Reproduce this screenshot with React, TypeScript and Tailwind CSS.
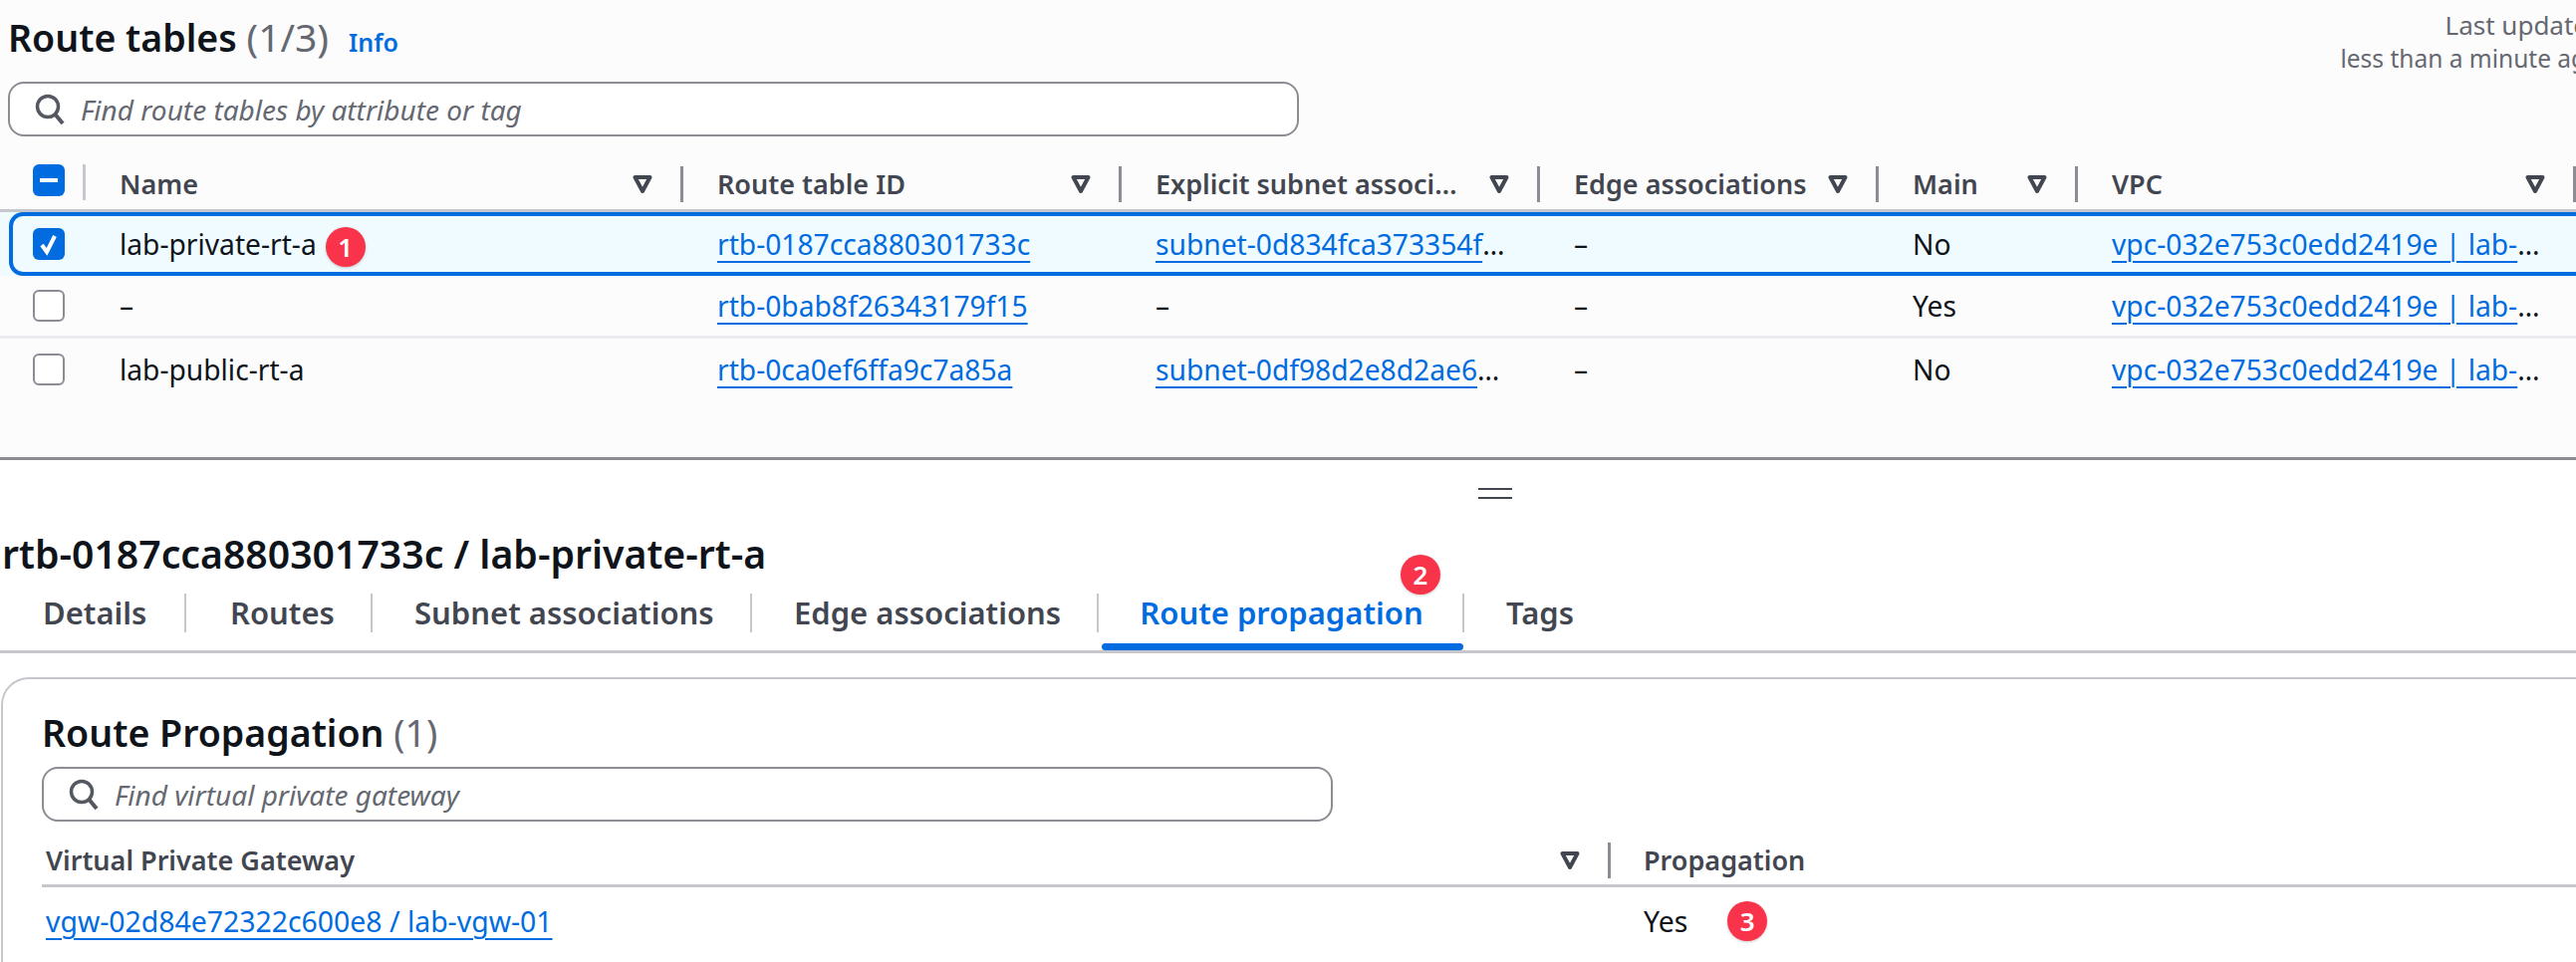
import type { ReactNode } from 'react';

const cols = 'grid grid-cols-[86px_600px_440px_420px_340px_200px_500px]';

const SearchIcon = () => (
  <svg width="32" height="32" viewBox="0 0 32 32" fill="none" stroke="#545861" strokeWidth="3.5" className="shrink-0">
    <circle cx="14" cy="13" r="10.5" />
    <path d="M21.5 21 L29 30" strokeWidth="4" />
  </svg>
);

const SortIcon = () => (
  <svg width="20" height="20" viewBox="0 0 20 20" fill="none" stroke="#424650" strokeWidth="4" strokeLinejoin="round" className="shrink-0">
    <path d="M2.5 3 H17.5 L10 17 Z" />
  </svg>
);

const Badge = ({ n }: { n: number }) => (
  <span className="flex h-10 w-10 shrink-0 items-center justify-center rounded-full bg-[#f9344a] text-[26px] font-semibold leading-none text-white shadow-[0_1px_3px_rgba(0,0,0,0.2)]">
    {n}
  </span>
);

const Search = ({ text, width }: { text: string; width: string }) => (
  <div className={`flex h-[55px] items-center gap-[15px] rounded-[16px] border-2 border-[#8c8c94] bg-white pl-[24px] ${width}`}>
    <SearchIcon />
    <span className="text-[28px] italic text-[#656871]">{text}</span>
  </div>
);

const Link = ({ children }: { children: ReactNode }) => (
  <a className="text-[#006ce0] underline decoration-2 underline-offset-[6px]">{children}</a>
);

const HeadCell = ({ label, sep = true }: { label: string; sep?: boolean }) => (
  <div className="flex items-center justify-between pl-[34px]">
    <span className="max-w-[310px] truncate text-[27px] font-semibold text-[#424650]">{label}</span>
    <div className="flex items-center gap-[28px]">
      <SortIcon />
      {sep ? <div className="h-[36px] w-[3px] bg-[#8c8c94]" /> : null}
    </div>
  </div>
);

const Cell = ({ children }: { children: ReactNode }) => (
  <div className="truncate pl-[34px] pr-[30px] text-[28.2px] text-[#0f141a]">{children}</div>
);

const Check = ({ state }: { state: 'all' | 'on' | 'off' }) => {
  if (state === 'off') {
    return <div className="h-8 w-8 rounded-[6px] border-2 border-[#8c8c94] bg-white" />;
  }
  return (
    <div className="flex h-8 w-8 items-center justify-center rounded-[6px] bg-[#006ce0]">
      <svg width="24" height="24" viewBox="0 0 24 24" fill="none" stroke="white" strokeWidth="4">
        {state === 'on' ? <path d="M5 13 L10 20 L18 4" /> : <path d="M3 12 H21" />}
      </svg>
    </div>
  );
};

const vpc = 'vpc-032e753c0edd2419e | lab-vpc-main';

const rows = [
  { check: 'on' as const, name: 'lab-private-rt-a', id: 'rtb-0187cca880301733c', subnet: 'subnet-0d834fca373354f1c / lab-private-a', main: 'No', h: 'h-[64px]' },
  { check: 'off' as const, name: '–', id: 'rtb-0bab8f26343179f15', subnet: '', main: 'Yes', h: 'h-[63px] border-b-[3px] border-[#ebebf0]' },
  { check: 'off' as const, name: 'lab-public-rt-a', id: 'rtb-0ca0ef6ffa9c7a85a', subnet: 'subnet-0df98d2e8d2ae6a1b / lab-public-a', main: 'No', h: 'h-[62px]' },
];

const tabs = [
  { label: 'Details', cls: 'w-[187px] pl-[43px] border-r-2' },
  { label: 'Routes', cls: 'w-[187px] pl-[44px] border-r-2' },
  { label: 'Subnet associations', cls: 'w-[381px] pl-[42px] border-r-2' },
  { label: 'Edge associations', cls: 'w-[348px] pl-[42px] border-r-2' },
];

export default function App() {
  return (
    <div className="h-[966px] w-[2586px] overflow-hidden bg-white font-['Noto_Sans',sans-serif]">
      {/* Route tables list */}
      <section className="h-[462px] border-b-[3px] border-[#8c8c94] bg-[#fcfcfc]">
        <div className="flex h-[82px] justify-between">
          <h1 className="flex items-baseline gap-[20px] pl-[8px] pt-[9px] text-[37.5px] font-semibold leading-[56px] text-[#0f141a]">
            <span>
              Route tables <span className="text-[39px] font-normal text-[#656871]">(1/3)</span>
            </span>
            <a className="text-[25px] font-semibold text-[#006ce0]">Info</a>
          </h1>
          <div className="pt-[8px] text-right leading-[34px] text-[#656871]">
            <div className="-mr-[28px] text-[26px]">Last updated</div>
            <div className="-mr-[25px] text-[24.5px]">less than a minute ago</div>
          </div>
        </div>

        <div className="pl-[8px]">
          <Search text="Find route tables by attribute or tag" width="w-[1296px]" />
        </div>

        <div className={`${cols} mt-[28px] h-[48px] border-b-[3px] border-[#c6c6cd] pb-[9px]`}>
          <div className="flex items-start justify-between pl-[33px]">
            <Check state="all" />
            <div className="h-[36px] w-[3px] bg-[#c6c6cd]" />
          </div>
          <HeadCell label="Name" />
          <HeadCell label="Route table ID" />
          <HeadCell label="Explicit subnet associations" />
          <HeadCell label="Edge associations" />
          <HeadCell label="Main" />
          <HeadCell label="VPC" />
        </div>

        {rows.map((r, i) => (
          <div key={r.id} className={`${cols} relative items-center ${r.h} ${i === 0 ? 'bg-[#f0fbff]' : ''}`}>
            {i === 0 ? (
              <div className="absolute inset-y-0 left-[9px] -right-[20px] rounded-l-[14px] border-4 border-[#006ce0]" />
            ) : null}
            <div className="pl-[33px]">
              <Check state={r.check} />
            </div>
            <div className="relative flex items-center gap-[9px] pl-[34px] text-[28.2px] text-[#0f141a]">
              {r.name}
              {i === 0 ? (
                <div className="mt-[6px]">
                  <Badge n={1} />
                </div>
              ) : null}
            </div>
            <Cell>
              <Link>{r.id}</Link>
            </Cell>
            <Cell>{r.subnet ? <Link>{r.subnet}</Link> : '–'}</Cell>
            <Cell>–</Cell>
            <Cell>{r.main}</Cell>
            <Cell>
              <Link>{vpc}</Link>
            </Cell>
          </div>
        ))}
      </section>

      {/* Split panel handle */}
      <div className="flex h-[60px] flex-col items-center pt-[28px]">
        <div className="ml-[416px] h-[11px] w-[34px] border-y-2 border-[#424650]" />
      </div>

      <h2 className="pl-[2px] text-[39.2px] font-semibold leading-[68px] text-[#0f141a]">
        rtb-0187cca880301733c / lab-private-rt-a
      </h2>

      {/* Tabs */}
      <div className="relative mt-[6px] h-[60px] border-b-[3px] border-[#c6c6cd]">
        <div className="flex items-start">
          {tabs.map((t) => (
            <div key={t.label} className={`flex h-[39px] items-center border-[#c6c6cd] text-[31px] font-semibold text-[#424650] ${t.cls}`}>
              {t.label}
            </div>
          ))}
          <div className="relative flex h-[39px] w-[367px] items-center justify-center border-r-2 border-[#c6c6cd] pl-[2px] text-[31px] font-semibold text-[#006ce0]">
            Route propagation
          </div>
          <div className="flex h-[39px] items-center pl-[42px] text-[31px] font-semibold text-[#424650]">Tags</div>
        </div>
        <div className="absolute bottom-0 left-[1106px] h-[7px] w-[363px] rounded-full bg-[#006ce0]" />
        <div className="absolute -top-[39px] left-[1406px]">
          <Badge n={2} />
        </div>
      </div>

      {/* Route propagation container */}
      <div className="ml-[1px] mt-[24px] h-[320px] w-[2620px] rounded-[28px] border-2 border-[#c6c6cd] pl-[39px] pt-[26px]">
        <h3 className="text-[37.5px] font-semibold leading-[56px] text-[#0f141a]">
          Route Propagation <span className="font-normal text-[#656871]">(1)</span>
        </h3>
        <div className="mt-[6px]">
          <Search text="Find virtual private gateway" width="w-[1296px]" />
        </div>
        <div className="mt-[18px] flex h-[48px] items-start border-b-[3px] border-[#c6c6cd] pl-[4px] pt-[1px]">
          <div className="flex w-[1571px] items-center justify-between">
            <span className="text-[27px] font-semibold text-[#424650]">Virtual Private Gateway</span>
            <div className="flex items-center gap-[28px]">
              <SortIcon />
              <div className="h-[36px] w-[3px] bg-[#8c8c94]" />
            </div>
          </div>
          <span className="pl-[33px] text-[27px] font-semibold text-[#424650]">Propagation</span>
        </div>
        <div className="flex h-[68px] items-center pl-[4px] text-[28.4px] text-[#0f141a]">
          <div className="w-[1604px]">
            <Link>vgw-02d84e72322c600e8 / lab-vgw-01</Link>
          </div>
          <span>Yes</span>
          <div className="ml-[40px]">
            <Badge n={3} />
          </div>
        </div>
      </div>
    </div>
  );
}
